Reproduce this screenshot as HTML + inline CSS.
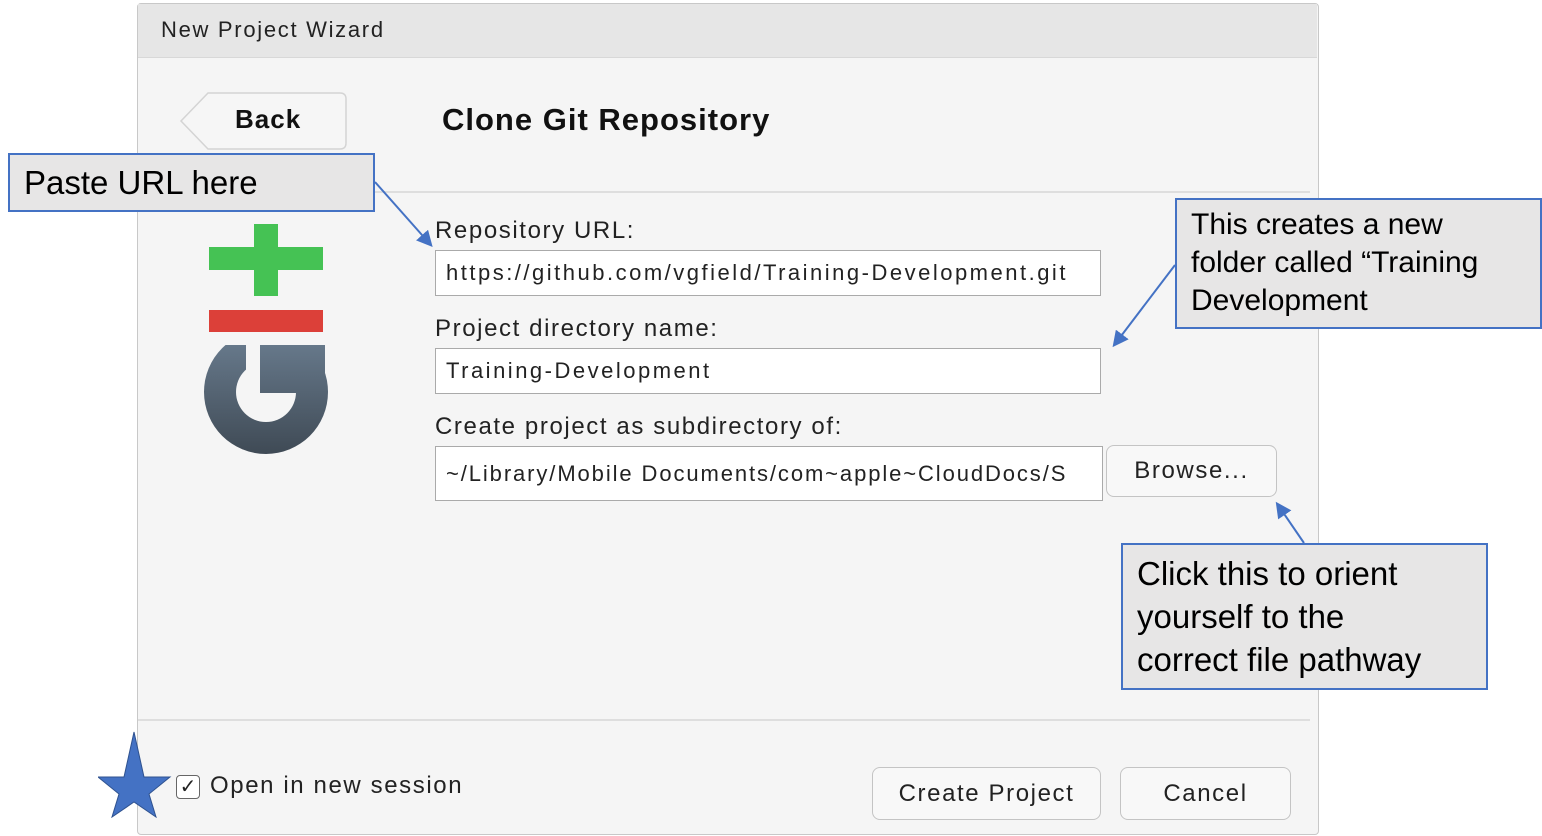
<!DOCTYPE html>
<html><head><meta charset="utf-8"><style>
body{margin:0;width:1542px;height:836px;background:#fff;position:relative;overflow:hidden;font-family:"Liberation Sans",sans-serif}
.a{position:absolute}
.dlg{left:137px;top:3px;width:1180px;height:830px;background:#f5f5f5;border:1px solid #c8c8c8;border-radius:4px}
.tb{left:138px;top:4px;width:1179px;height:53px;background:#e6e6e6;border-bottom:1px solid #d8d8d8}
.lbl{font-size:24px;color:#222;letter-spacing:1.6px}
.inp{background:#fff;border:1px solid #aaa;font-size:22px;color:#222;box-sizing:border-box;padding-left:10px;display:flex;align-items:center;letter-spacing:2.5px;white-space:nowrap;overflow:hidden}
.btn{background:#f8f8f8;border:1px solid #c4c4c4;border-radius:8px;box-sizing:border-box;display:flex;align-items:center;justify-content:center;font-size:24px;color:#222;letter-spacing:1.6px}
.co{background:#e7e6e6;border:2px solid #4472c4;box-sizing:border-box;color:#000;padding:4px 14px;line-height:1.2}
</style></head><body>
<div class="a dlg"></div>
<div class="a tb"></div>
<div class="a" style="left:161px;top:17px;font-size:22px;color:#222;letter-spacing:1.7px">New Project Wizard</div>
<svg class="a" style="left:178px;top:91px" width="172" height="62"><path d="M30 2 H162 Q168 2 168 8 V52 Q168 58 162 58 H30 L3 30 Z" fill="#f6f6f6" stroke="#d4d4d4" stroke-width="1.5"/></svg>
<div class="a" style="left:235px;top:104px;font-size:26px;font-weight:bold;color:#111;letter-spacing:1px">Back</div>
<div class="a" style="left:442px;top:102px;font-size:31px;font-weight:bold;color:#111;letter-spacing:1px">Clone Git Repository</div>
<div class="a" style="left:370px;top:191px;width:940px;height:2px;background:#dedede"></div>
<div class="a" style="left:138px;top:719px;width:1172px;height:2px;background:#dedede"></div>
<div class="a" style="left:209px;top:247px;width:114px;height:23px;background:#45c254"></div>
<div class="a" style="left:254px;top:224px;width:24px;height:72px;background:#45c254"></div>
<div class="a" style="left:209px;top:310px;width:114px;height:22px;background:#dc4039"></div>
<svg class="a" style="left:200px;top:340px" width="135" height="120"><defs><linearGradient id="g" gradientUnits="userSpaceOnUse" x1="0" y1="5" x2="0" y2="114"><stop offset="0" stop-color="#66788a"/><stop offset="1" stop-color="#3f4a55"/></linearGradient>
<clipPath id="c"><rect x="0" y="5" width="135" height="120"/></clipPath></defs>
<g clip-path="url(#c)">
<circle cx="66" cy="52" r="62" fill="url(#g)"/>
<circle cx="66" cy="52" r="30" fill="#f5f5f5"/>
<rect x="60" y="0" width="65" height="53" fill="url(#g)"/>
<rect x="46" y="0" width="14" height="30" fill="#f5f5f5"/>
</g></svg>
<div class="a lbl" style="left:435px;top:217px">Repository URL:</div>
<div class="a inp" style="left:435px;top:250px;width:666px;height:46px">https://github.com/vgfield/Training-Development.git</div>
<div class="a lbl" style="left:435px;top:315px">Project directory name:</div>
<div class="a inp" style="left:435px;top:348px;width:666px;height:46px">Training-Development</div>
<div class="a lbl" style="left:435px;top:413px">Create project as subdirectory of:</div>
<div class="a inp" style="left:435px;top:446px;width:668px;height:55px;letter-spacing:1.9px">~/Library/Mobile Documents/com~apple~CloudDocs/S</div>
<div class="a btn" style="left:1106px;top:445px;width:171px;height:52px">Browse...</div>
<div class="a btn" style="left:872px;top:767px;width:229px;height:53px">Create Project</div>
<div class="a btn" style="left:1120px;top:767px;width:171px;height:53px">Cancel</div>
<div class="a" style="left:176px;top:775px;width:22px;height:22px;border:1.5px solid #666;border-radius:4px;background:#fff;font-size:20px;line-height:22px;text-align:center;color:#222">✓</div>
<div class="a" style="left:210px;top:772px;font-size:24px;color:#222;letter-spacing:1.6px">Open in new session</div>
<svg class="a" style="left:98px;top:730px" width="74" height="88"><polygon points="36,2 46,47 72,47 51,64 58,87 36,72 14,87 21,64 0,47 26,47" fill="#4472c4" stroke="#2f528f" stroke-width="1"/></svg>
<div class="a co" style="left:8px;top:153px;width:367px;height:59px;font-size:33px;padding-top:8px">Paste URL here</div>
<div class="a co" style="left:1175px;top:198px;width:367px;height:131px;font-size:30px;padding:6px 14px 0 14px;line-height:1.27"><span style="display:block;width:330px">This creates a new folder called “Training Development</span></div>
<div class="a co" style="left:1121px;top:543px;width:367px;height:147px;font-size:33px;padding-top:8px;line-height:1.3"><span style="display:block;width:300px">Click this to orient yourself to the correct file pathway</span></div>
<svg class="a" style="left:0;top:0" width="1542" height="836"><defs><marker id="m" markerWidth="8" markerHeight="8" refX="6" refY="4" orient="auto"><path d="M0 0 L8 4 L0 8 Z" fill="#4472c4"/></marker></defs>
<g stroke="#4472c4" stroke-width="2" fill="none" marker-end="url(#m)">
<line x1="375" y1="182" x2="430" y2="244"/>
<line x1="1175" y1="265" x2="1115" y2="344"/>
<line x1="1304" y1="543" x2="1278" y2="505"/>
</g></svg>
</body></html>
